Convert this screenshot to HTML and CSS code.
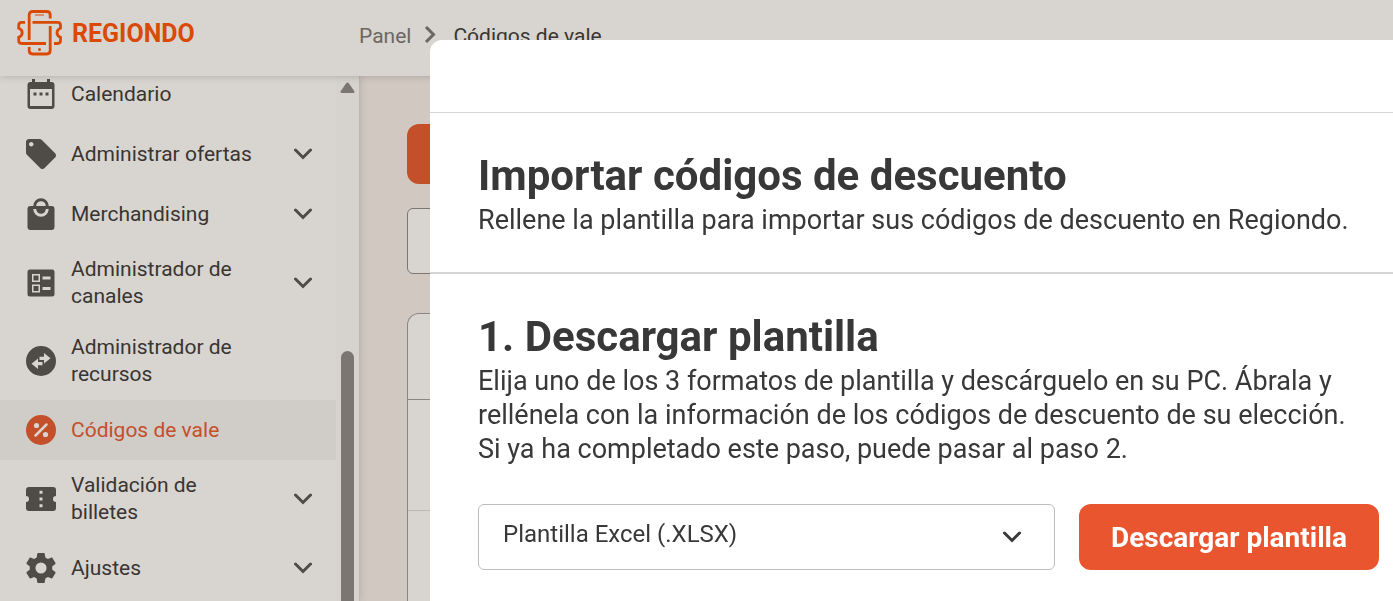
FILE: index.html
```html
<!DOCTYPE html>
<html lang="es">
<head>
  <meta charset="UTF-8" />
  <meta name="viewport" content="width=device-width, initial-scale=1" />
  <title>Regiondo - Códigos de vale</title>
  <link rel="stylesheet" href="styles.css">
</head>
<body>

<header class="topbar">
  <a href="#" class="logo">
    <svg width="46" height="46" viewBox="0 0 46 46" fill="none" stroke="currentColor" stroke-width="2.8">
      <path d="M12.2 30V5q0-3.5 3.5-3.5h14q3.5 0 3.5 3.5v3.5" />
      <path d="M33.2 16v24.500q0 3.500-3.500 3.500h-14q-3.500 0-3.500-3.500V37" />
      <path d="M15.500 12.300H40.500q3 0 3 3v3q-3.500 1.200-3.500 4.500t3.500 4.500v3.200q0 3-3 3H37" />
      <path d="M8 12.300H4.700q-3 0-3 3v3q3.500 1.200 3.500 4.500t-3.500 4.500v3.200q0 3 3 3H29" />
      <path d="M18 5h9" stroke-width="1" />
      <circle cx="22.500" cy="39.500" r="1.500" fill="currentColor" stroke="none" />
    </svg>
    <span>REGIONDO</span>
  </a>
  <nav class="breadcrumb" aria-label="Ruta">
    <a href="#">Panel</a>
    <svg width="14" height="20" viewBox="0 0 14 20" fill="none" stroke="currentColor" stroke-width="3"><path d="M3 1l7.500 7.500L3 16" /></svg>
    <span>Códigos de vale</span>
  </nav>
</header>

<div class="layout">
  <aside class="sidebar">
    <nav class="menu">
      <a href="#" class="item">
        <svg class="icon" viewBox="0 0 30 30"><path fill-rule="evenodd" d="M6 0h3v3h12V0h3v3h1.500a3 3 0 0 1 3 3v21a3 3 0 0 1-3 3h-21a3 3 0 0 1-3-3V6a3 3 0 0 1 3-3H6zM4 10v17h22V10z" /><path d="M7.500 13.500h3v3h-3zM13.500 13.500h3v3h-3zM19.500 13.500h3v3h-3z" /></svg>
        <span>Calendario</span>
      </a>
      <a href="#" class="item">
        <svg class="icon" viewBox="2 2 20 20"><path d="M21.410 11.580l-9-9C12.050 2.220 11.550 2 11 2H4c-1.100 0-2 .900-2 2v7c0 .550.220 1.050.590 1.420l9 9c.360.360.860.580 1.410.580s1.050-.220 1.410-.590l7-7c.370-.360.590-.860.590-1.410s-.230-1.060-.590-1.420zM5.500 7C4.670 7 4 6.330 4 5.500S4.670 4 5.500 4 7 4.670 7 5.500 6.330 7 5.500 7z" /></svg>
        <span>Administrar ofertas</span>
        <svg class="chevron" viewBox="0 0 18 12"><path d="M1.500 2L9 9.500 16.500 2" /></svg>
      </a>
      <a href="#" class="item">
        <svg class="icon tall" viewBox="0 0 30 32"><path fill-rule="evenodd" d="M4.500 8H7.300a7.700 7.700 0 0 1 15.400 0h2.800a3 3 0 0 1 3 3v18a3 3 0 0 1-3 3h-21a3 3 0 0 1-3-3V11a3 3 0 0 1 3-3zM10.200 8h9.600a4.800 4.800 0 0 0-9.600 0zM7.300 11a7.700 7.700 0 0 0 15.400 0h-2.900a4.800 4.800 0 0 1-9.600 0z" /></svg>
        <span>Merchandising</span>
        <svg class="chevron" viewBox="0 0 18 12"><path d="M1.500 2L9 9.500 16.500 2" /></svg>
      </a>
      <a href="#" class="item">
        <svg class="icon" viewBox="0 0 30 30"><path fill-rule="evenodd" d="M4 1.500h22a2.500 2.500 0 0 1 2.500 2.500v22a2.500 2.500 0 0 1-2.500 2.500H4A2.500 2.500 0 0 1 1.500 26V4A2.500 2.500 0 0 1 4 1.500zM6 6v8h8V6zM7.500 7.500h5v5h-5zM6 16.500v8h8v-8zM7.500 18h5v5h-5zM16.500 8.500v3h8v-3zM16.500 19v3h8v-3z" /></svg>
        <span>Administrador de canales</span>
        <svg class="chevron" viewBox="0 0 18 12"><path d="M1.500 2L9 9.500 16.500 2" /></svg>
      </a>
      <a href="#" class="item">
        <svg class="icon" viewBox="0 0 30 30"><circle cx="15" cy="15" r="15" /><path class="cut" d="M18 7l6.500 5.300L18 17.500V14h-4.500v-3.200H18zM12 12.500V16h4.500v3.200H12V23l-6.500-5.300z" /></svg>
        <span>Administrador de recursos</span>
      </a>
      <a href="#" class="item active" aria-current="page">
        <svg class="icon" viewBox="0 0 30 30"><circle cx="15" cy="15" r="15" /><circle class="cut" cx="10.500" cy="10.500" r="2.600" /><circle class="cut" cx="19.500" cy="19.500" r="2.600" /><path class="slash" d="M9.500 20.500l11-11" /></svg>
        <span>Códigos de vale</span>
      </a>
      <a href="#" class="item">
        <svg class="icon" viewBox="0 0 30 30"><path fill-rule="evenodd" d="M3 3h24a3 3 0 0 1 3 3v6a3 3 0 0 0 0 6v6a3 3 0 0 1-3 3H3a3 3 0 0 1-3-3v-6a3 3 0 0 0 0-6V6a3 3 0 0 1 3-3zM13.500 6.800v3h3v-3zM13.500 13.500v3h3v-3zM13.500 20.200v3h3v-3z" /></svg>
        <span>Validación de billetes</span>
        <svg class="chevron" viewBox="0 0 18 12"><path d="M1.500 2L9 9.500 16.500 2" /></svg>
      </a>
      <a href="#" class="item">
        <svg class="icon" viewBox="2 2 20 20"><path d="M19.430 12.980c.040-.320.070-.640.070-.980s-.030-.660-.070-.980l2.110-1.650c.190-.150.240-.420.120-.640l-2-3.460c-.120-.220-.390-.300-.610-.220l-2.490 1c-.520-.400-1.080-.730-1.690-.980l-.380-2.650C14.460 2.180 14.250 2 14 2h-4c-.250 0-.460.180-.490.420l-.380 2.650c-.610.250-1.170.590-1.690.980l-2.490-1c-.230-.090-.490 0-.610.220l-2 3.460c-.130.220-.070.490.120.640l2.110 1.650c-.040.320-.070.650-.070.980s.030.660.070.980l-2.110 1.650c-.190.150-.240.420-.120.640l2 3.460c.120.220.390.300.610.220l2.490-1c.520.400 1.080.730 1.690.980l.380 2.650c.030.240.240.420.490.420h4c.250 0 .460-.180.490-.420l.380-2.650c.610-.250 1.170-.590 1.690-.980l2.490 1c.230.090.490 0 .610-.220l2-3.460c.120-.220.070-.490-.120-.640l-2.110-1.650zM12 15.700a3.700 3.700 0 1 1 0-7.400 3.700 3.700 0 0 1 0 7.400z" /></svg>
        <span>Ajustes</span>
        <svg class="chevron" viewBox="0 0 18 12"><path d="M1.500 2L9 9.500 16.500 2" /></svg>
      </a>
    </nav>
    <div class="scrollbar">
      <svg width="15" height="12" viewBox="0 0 15 12"><path d="M6 1.500q1.500-2 3 0L14.200 9q1 2-1 2H1.800q-2 0-1-2z" /></svg>
      <div class="thumb"></div>
    </div>
  </aside>

  <main class="content">
    <div class="action"></div>
    <div class="search"></div>
    <div class="list">
      <div class="list-head"></div>
      <div class="list-row"></div>
    </div>
  </main>
</div>

<div class="modal" role="dialog" aria-labelledby="modal-title">
  <div class="modal-bar"></div>
  <section class="intro">
    <h1 id="modal-title">Importar códigos de descuento</h1>
    <p>Rellene la plantilla para importar sus códigos de descuento en Regiondo.</p>
  </section>
  <section class="step">
    <h2>1. Descargar plantilla</h2>
    <p>Elija uno de los 3 formatos de plantilla y descárguelo en su PC. Ábrala y rellénela con la información de los códigos de descuento de su elección. Si ya ha completado este paso, puede pasar al paso 2.</p>
    <div class="download">
      <div class="select">
        <select aria-label="Formato de plantilla">
          <option>Plantilla Excel (.XLSX)</option>
        </select>
        <svg class="chevron" viewBox="0 0 18 12"><path d="M1.500 2L9 9.500 16.500 2" /></svg>
      </div>
      <button type="button">Descargar plantilla</button>
    </div>
  </section>
</div>

</body>
</html>
```
FILE: styles.css
```css
* {
  box-sizing: border-box;
}

body {
  margin: 0;
  height: 100vh;
  display: flex;
  flex-direction: column;
  overflow: hidden;
  background: #d1c8c2;
  color: #383532;
  font-family: Roboto, Arial, sans-serif;
  font-size: 21px;
}

a {
  color: inherit;
  text-decoration: none;
}

/* Top bar */
.topbar {
  display: flex;
  align-items: flex-start;
  flex-shrink: 0;
  height: 76px;
  padding-top: 10px;
  background: #d8d4d0;
  box-shadow: 0 0 8px rgba(0,0,0,0.2);
  z-index: 1;
}

.logo {
  display: flex;
  align-items: center;
  gap: 9px;
  width: 359px;
  padding-left: 17px;
  color: #da4a07;
  font-size: 25px;
  font-weight: 700;
}

.breadcrumb {
  display: flex;
  align-items: center;
  gap: 12px;
  height: 52px;
  color: #383532;
}

.breadcrumb a,
.breadcrumb svg {
  color: #6b6763;
}

.breadcrumb span {
  padding-left: 4px;
}

/* Sidebar */
.layout {
  display: flex;
  flex: 1;
  min-height: 0;
}

.sidebar {
  display: flex;
  flex-shrink: 0;
  width: 360px;
  background: #d8d4d0;
  border-right: 1px solid #bdb7b2;
  box-shadow: 0 0 8px rgba(0,0,0,0.15);
  overflow: hidden;
}

.menu {
  flex: 1;
  margin-top: -12px;
}

.item {
  display: flex;
  align-items: center;
  gap: 15px;
  min-height: 60px;
  padding: 12px 24px 12px 26px;
  line-height: 27px;
}

.item span {
  flex: 1;
  max-width: 190px;
}

.item.active {
  background: #d0ccc8;
  color: #c44f2b;
}

.icon {
  width: 30px;
  height: 30px;
  flex-shrink: 0;
  fill: #4f4b47;
}

.icon.tall {
  height: 32px;
}

.active .icon {
  fill: #c44f2b;
}

.icon .cut {
  fill: #d8d4d0;
}

.icon .slash {
  stroke: #d8d4d0;
  stroke-width: 2.5;
  stroke-linecap: round;
}

.chevron {
  width: 18px;
  height: 12px;
  margin-left: auto;
  flex-shrink: 0;
  fill: none;
  stroke: #4f4b47;
  stroke-width: 3;
  stroke-linecap: round;
}

.scrollbar {
  display: flex;
  flex-direction: column;
  align-items: center;
  justify-content: space-between;
  width: 23px;
  padding-top: 6px;
  background: #d6d2ce;
}

.scrollbar svg {
  fill: #7b7672;
}

.thumb {
  width: 13px;
  height: 250px;
  border-radius: 7px 7px 0 0;
  background: #7b7672;
}

/* Page behind the dialog */
.content {
  flex: 1;
  display: flex;
  flex-direction: column;
  padding: 48px 0 0 47px;
}

.action {
  height: 60px;
  border-radius: 12px;
  background: #c44f2b;
}

.search {
  height: 66px;
  margin-top: 24px;
  border: 1px solid #7b7672;
  border-radius: 6px;
  background: #d8d4d0;
}

.list {
  flex: 1;
  margin-top: 39px;
  border: 1px solid #8b8682;
  border-bottom: 0;
  border-radius: 12px 12px 0 0;
  background: #d8d4d0;
}

.list-head {
  height: 86px;
  border-bottom: 1px solid #8b8682;
}

.list-row {
  height: 111px;
  border-bottom: 1px solid #bab6b2;
}

/* Import dialog */
.modal {
  position: fixed;
  top: 40px;
  right: 0;
  bottom: 0;
  left: 430px;
  z-index: 2;
  border-radius: 12px 0 0 0;
  background: #fff;
  color: #383838;
  font-size: 27px;
  overflow: hidden;
}

.modal-bar {
  height: 73px;
  border-bottom: 1px solid #d4d4d4;
}

.modal h1,
.modal h2 {
  margin: 0 0 2px;
  font-size: 42px;
  font-weight: 700;
  line-height: 50px;
}

.modal p {
  margin: 0;
  padding-right: 14px;
  line-height: 34px;
}

.intro {
  padding: 38px 14px 35px 48px;
  border-bottom: 2px solid #d4d4d4;
}

.step {
  padding: 38px 14px 31px 48px;
}

.download {
  display: flex;
  gap: 24px;
  margin-top: 38px;
}

.select {
  position: relative;
  flex: 1;
}

.select select {
  appearance: none;
  width: 100%;
  height: 66px;
  padding: 0 72px 6px 24px;
  border: 1px solid #bdbdbd;
  border-radius: 6px;
  background: #fff;
  color: #383838;
  font: 24px Roboto, Arial, sans-serif;
}

.select .chevron {
  position: absolute;
  top: 27px;
  right: 34px;
  stroke: #383838;
  pointer-events: none;
}

.download button {
  width: 300px;
  height: 66px;
  border: 0;
  border-radius: 12px;
  background: #e8552e;
  color: #fff;
  font: 700 28px Roboto, Arial, sans-serif;
  cursor: pointer;
}
```
